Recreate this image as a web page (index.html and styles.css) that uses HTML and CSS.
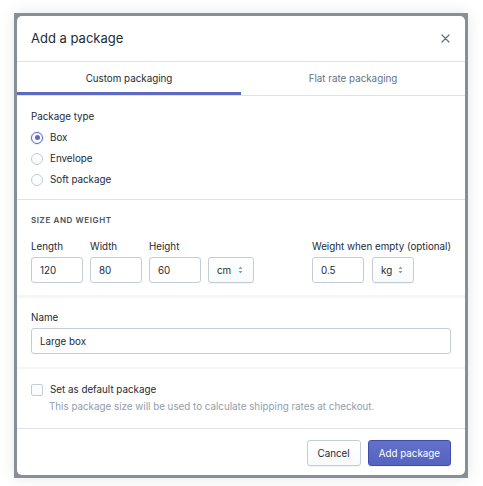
FILE: index.html
```html
<!DOCTYPE html>
<html lang="en">
<head>
<meta charset="utf-8">
<title>Add a package</title>
<link rel="stylesheet" href="styles.css">
</head>
<body>
<div class="stage">
  <div class="frame">
    <div class="modal">
      <header class="modal-header">
        <h1 class="modal-title">Add a package</h1>
        <button class="close" type="button" aria-label="Close">
          <svg width="9" height="9" viewBox="0 0 9 9"><path d="M1 1L8 8M8 1L1 8" stroke="#637381" stroke-width="1.3" stroke-linecap="round"/></svg>
        </button>
      </header>
      <nav class="tabs">
        <div class="tab tab-active">Custom packaging</div>
        <div class="tab">Flat rate packaging</div>
      </nav>

      <section class="section section-type">
        <div class="label">Package type</div>
        <ul class="choices">
          <li class="choice"><span class="radio radio-checked"></span>Box</li>
          <li class="choice"><span class="radio"></span>Envelope</li>
          <li class="choice"><span class="radio"></span>Soft package</li>
        </ul>
      </section>

      <section class="section section-size">
        <h2 class="subheading">SIZE AND WEIGHT</h2>
        <div class="dims">
          <div class="group">
            <div class="field">
              <div class="label">Length</div>
              <div class="input">120</div>
            </div>
            <div class="field">
              <div class="label">Width</div>
              <div class="input">80</div>
            </div>
            <div class="field">
              <div class="label">Height</div>
              <div class="input">60</div>
            </div>
            <div class="field">
              <div class="label">&nbsp;</div>
              <div class="select select-cm">cm<svg class="arrows" width="5" height="8" viewBox="0 0 5 8"><path d="M2.5 0.5L4.5 3H0.5Z M2.5 7.5L4.5 5H0.5Z" fill="#919eab"/></svg></div>
            </div>
          </div>
          <div class="group group-weight">
            <div class="label">Weight when empty (optional)</div>
            <div class="row">
              <div class="input">0.5</div>
              <div class="select select-kg">kg<svg class="arrows" width="5" height="8" viewBox="0 0 5 8"><path d="M2.5 0.5L4.5 3H0.5Z M2.5 7.5L4.5 5H0.5Z" fill="#919eab"/></svg></div>
            </div>
          </div>
        </div>
      </section>

      <section class="section section-name">
        <div class="label">Name</div>
        <div class="input input-wide">Large box</div>
      </section>

      <section class="section section-default">
        <div class="check-row"><span class="checkbox"></span>Set as default package</div>
        <div class="help">This package size will be used to calculate shipping rates at checkout.</div>
      </section>

      <footer class="modal-footer">
        <button class="btn" type="button">Cancel</button>
        <button class="btn btn-primary" type="button">Add package</button>
      </footer>
    </div>
  </div>
</div>
</body>
</html>
```

FILE: styles.css
```css
* { box-sizing: border-box; }

html, body {
  margin: 0;
  padding: 0;
  background: #ffffff;
}

body {
  font-family: Inter, "Liberation Sans", sans-serif;
  font-size: 9.8px;
  line-height: 15px;
  color: #212b36;
}

.stage {
  padding: 13px 15px 8px 14px;
}

.frame {
  width: 454px;
  padding: 3px;
  background: #8a8e96;
  box-shadow: 0 0 14px rgba(0, 0, 0, 0.10);
}

.modal {
  background: #ffffff;
  border-radius: 5px;
  overflow: hidden;
}

.modal-header {
  height: 46px;
  padding: 0 14px;
  display: flex;
  align-items: center;
  justify-content: space-between;
  border-bottom: 1px solid #dfe3e8;
}

.modal-title {
  margin: 0;
  font-size: 13px;
  font-weight: 400;
  color: #212b36;
}

.close {
  border: 0;
  background: none;
  padding: 0;
  margin-right: 1px;
  display: flex;
}

.tabs {
  display: flex;
  height: 34px;
  border-bottom: 1px solid #dfe3e8;
}

.tab {
  flex: 1;
  display: flex;
  align-items: center;
  justify-content: center;
  color: #637381;
  border-bottom: 3px solid transparent;
  padding-top: 3px;
}

.tab-active {
  color: #212b36;
  border-bottom-color: #5c6ac4;
}

.section {
  padding: 0 14px;
}

.section-type {
  padding-top: 13px;
  padding-bottom: 9px;
  border-bottom: 1px solid #dfe3e8;
}

.label {
  color: #212b36;
  margin-bottom: 3px;
  white-space: nowrap;
}

.choices {
  list-style: none;
  margin: 0;
  padding: 0;
}

.choice {
  height: 21px;
  display: flex;
  align-items: center;
  gap: 7px;
}

.radio {
  width: 12px;
  height: 12px;
  border-radius: 50%;
  border: 1px solid #c4cdd5;
  background: linear-gradient(#ffffff, #f9fafb);
  display: flex;
  align-items: center;
  justify-content: center;
}

.radio-checked {
  border-color: #5c6ac4;
  box-shadow: 0 0 0 1px rgba(92, 106, 196, 0.15);
}

.radio-checked::after {
  content: "";
  width: 5px;
  height: 5px;
  border-radius: 50%;
  background: #5c6ac4;
}

.section-size {
  padding-top: 14px;
  padding-bottom: 12px;
  border-bottom: 3px solid #f4f6f8;
}

.subheading {
  margin: 0 0 13px;
  font-size: 8px;
  line-height: 12px;
  font-weight: 600;
  letter-spacing: 0.6px;
  color: #454f5b;
}

.dims {
  display: flex;
  gap: 58px;
}

.group {
  display: flex;
  gap: 7px;
}

.group-weight {
  flex-direction: column;
  gap: 0;
}

.row {
  display: flex;
  gap: 8px;
}

.input {
  width: 52px;
  height: 26px;
  border: 1px solid #c4cdd5;
  border-radius: 3px;
  padding: 0 8px;
  display: flex;
  align-items: center;
  background: #ffffff;
  color: #212b36;
}

.input-wide {
  width: 100%;
}

.select {
  height: 26px;
  border: 1px solid #c4cdd5;
  border-radius: 3px;
  padding: 0 8px;
  display: flex;
  align-items: center;
  justify-content: space-between;
  background: linear-gradient(#ffffff, #f9fafb);
  box-shadow: 0 1px 0 rgba(22, 29, 37, 0.05);
  color: #212b36;
}

.select-cm { width: 46px; }
.select-kg { width: 42px; }

.arrows { margin-right: 2px; }

.section-name {
  padding-top: 12px;
  padding-bottom: 13px;
  border-bottom: 2px solid #f4f6f8;
}

.section-default {
  padding-top: 13px;
  padding-bottom: 14px;
  border-bottom: 1px solid #dfe3e8;
}

.check-row {
  display: flex;
  align-items: center;
  gap: 7px;
}

.checkbox {
  width: 12px;
  height: 12px;
  border: 1px solid #c4cdd5;
  border-radius: 2px;
  background: linear-gradient(#ffffff, #f9fafb);
}

.help {
  margin-top: 2px;
  padding-left: 18px;
  color: #919eab;
}

.modal-footer {
  display: flex;
  justify-content: flex-end;
  gap: 7px;
  padding: 11px 14px 9px;
}

.btn {
  height: 26px;
  padding: 0 10px;
  border: 1px solid #c4cdd5;
  border-radius: 3px;
  background: linear-gradient(#ffffff, #f9fafb);
  box-shadow: 0 1px 0 rgba(22, 29, 37, 0.05);
  font-family: Inter, "Liberation Sans", sans-serif;
  font-size: 9.8px;
  color: #212b36;
}

.btn-primary {
  border-color: #3f4eae;
  background: linear-gradient(#6371c7, #5563c1);
  color: #ffffff;
}
```
